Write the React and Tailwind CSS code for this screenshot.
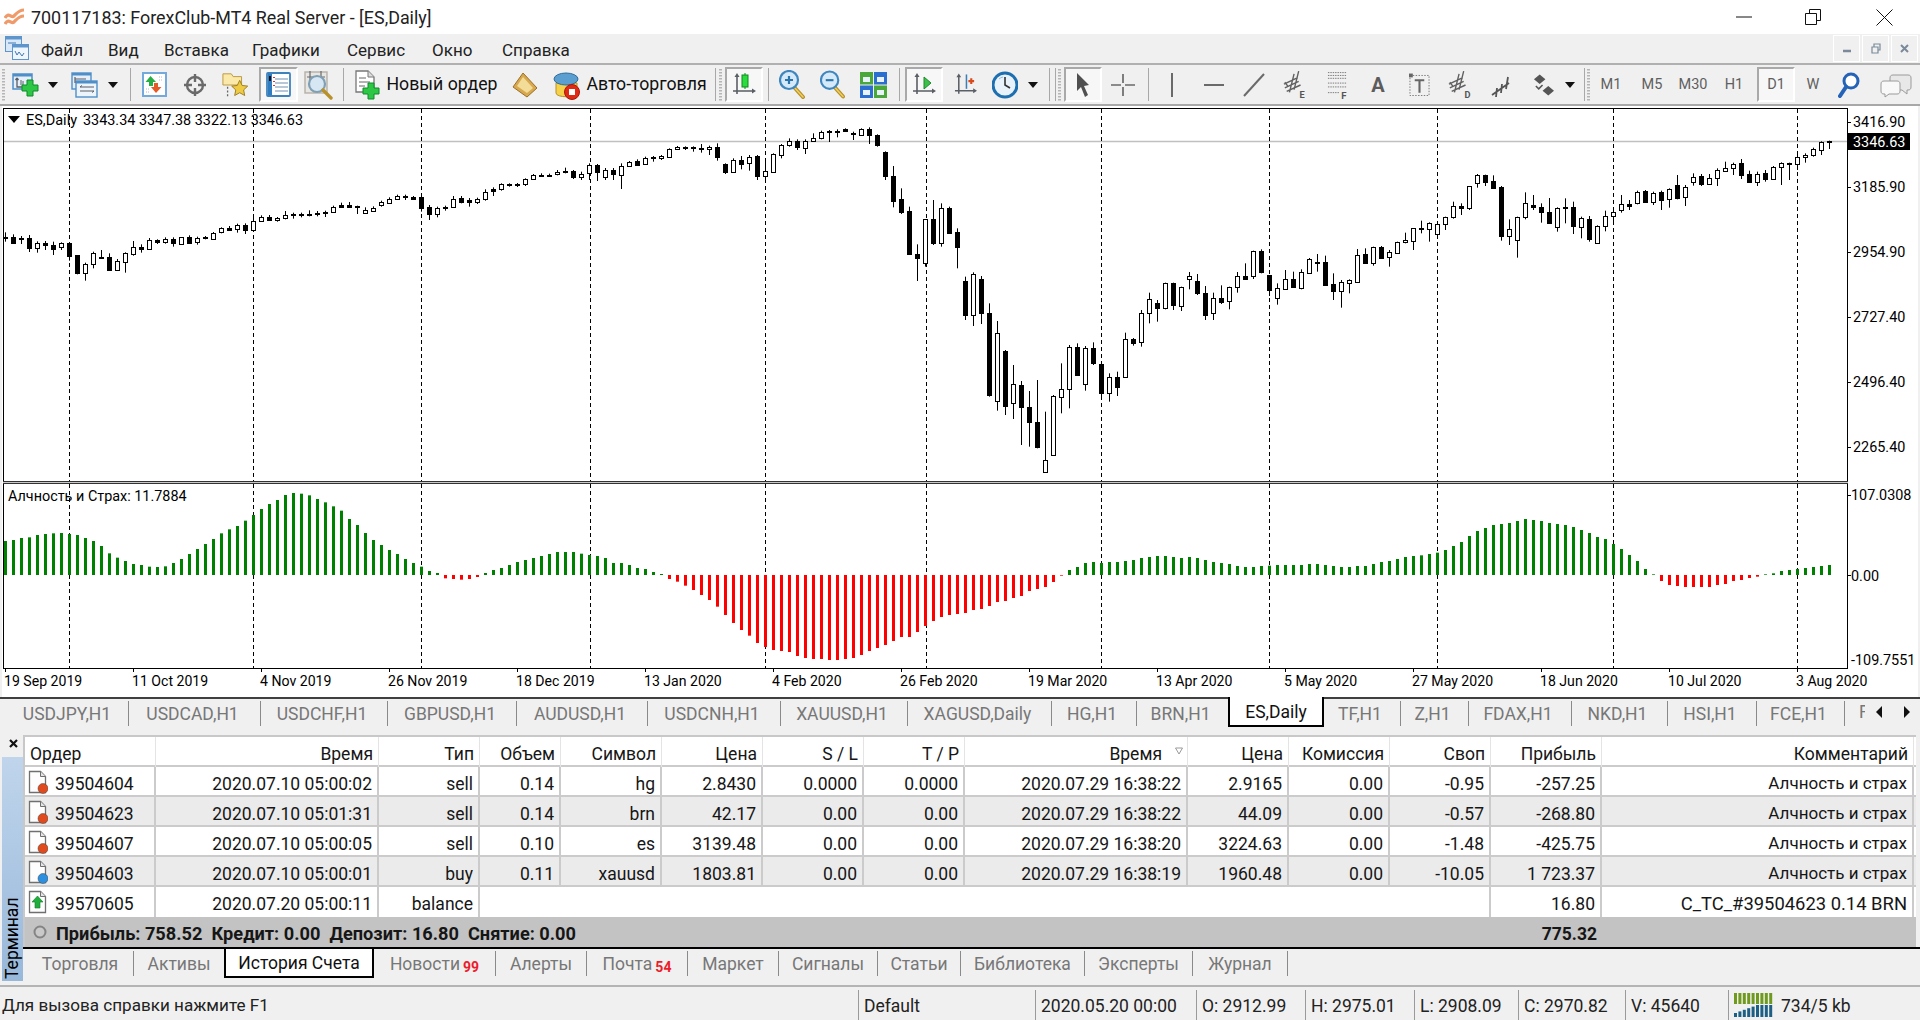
import React from "react";

const C = [
[410,414,397,425,1],[410,428,403,432,1],[414,418,408,432,1],[414,443,405,456,1],[430,443,424,458,0],[430,436,423,450,1],[436,446,425,465,1],[430,440,427,450,0],[430,467,427,482,1],[466,518,465,523,1],[493,518,488,542,0],[460,493,455,505,0],[470,473,450,474,1],[471,510,460,512,1],[484,510,477,513,0],[460,485,457,518,0],[442,461,423,467,0],[441,446,433,458,1],[421,446,414,446,0],[421,425,418,432,1],
[418,425,412,431,0],[418,430,412,440,1],[412,431,411,431,0],[411,428,406,430,1],[413,425,410,434,0],[411,414,408,418,1],[400,416,396,419,0],[385,397,382,400,0],[385,390,378,393,1],[376,386,371,398,0],[375,390,370,402,1],[364,390,350,392,0],[352,362,346,366,0],[351,359,345,361,1],[353,360,351,365,0],[346,353,333,358,0],[341,344,338,356,1],[341,344,338,352,1],[341,345,331,349,1],[338,342,333,349,1],
[335,338,332,351,1],[320,335,317,338,0],[316,320,308,323,1],[315,320,306,323,1],[317,322,317,342,1],[331,338,322,342,0],[325,332,319,335,0],[307,316,302,320,0],[297,308,292,312,0],[287,297,284,298,0],[287,290,284,300,1],[290,296,288,298,1],[292,323,285,335,1],[321,341,315,360,1],[325,341,320,352,0],[320,323,317,332,1],[296,320,288,322,0],[294,306,288,310,1],[300,305,294,320,1],[296,305,293,312,0],
[275,297,268,302,0],[268,274,262,288,1],[253,268,250,272,0],[253,256,250,260,1],[253,256,249,261,1],[238,253,235,258,0],[226,238,222,240,0],[224,227,220,229,1],[224,227,221,230,1],[215,223,210,226,0],[214,216,203,220,1],[213,230,210,237,1],[223,230,215,240,0],[196,218,190,240,0],[196,217,192,243,1],[211,232,204,240,0],[211,222,204,240,1],[199,224,190,267,0],[186,197,183,200,0],[184,194,178,198,1],
[173,193,170,195,0],[172,175,168,185,1],[169,175,165,180,0],[148,170,145,172,0],[140,148,138,150,0],[142,145,139,150,1],[142,145,139,155,1],[144,148,132,158,1],[142,148,137,165,0],[141,171,130,182,1],[192,216,190,222,1],[179,215,175,217,0],[179,191,168,208,1],[170,188,165,212,0],[168,228,165,240,1],[212,229,185,240,0],[163,215,160,218,0],[134,166,132,175,0],[124,134,115,140,0],[124,141,118,150,1],
[122,145,118,162,0],[115,122,100,124,0],[95,115,92,118,0],[93,96,90,126,1],[94,96,88,112,1],[87,92,85,94,1],[99,102,95,120,1],[88,104,85,105,0],[87,106,82,132,1],[106,135,103,140,1],[156,228,154,240,1],[228,302,198,322,1],[298,337,265,342,1],[334,462,320,465,1],[462,473,433,543,1],[358,488,358,500,0],[358,428,300,435,1],[325,428,310,440,0],[323,398,320,402,1],[397,440,385,505,1],
[544,644,530,660,1],[523,644,517,678,0],[538,638,528,672,1],[640,885,610,890,1],[700,902,663,932,0],[753,917,750,945,1],[853,910,795,957,0],[856,920,843,1035,1],[922,965,873,1040,1],[966,1040,840,1045,1],[1081,1117,935,1118,0],[888,1065,885,1068,0],[868,890,790,940,0],[742,868,735,925,0],[742,824,730,826,1],[744,851,738,872,0],[744,790,727,795,1],[793,878,793,900,1],[830,878,820,905,0],[830,860,815,888,1],
[718,830,698,832,0],[718,728,714,737,1],[640,725,630,740,0],[598,640,578,670,0],[609,623,600,665,1],[550,623,548,628,0],[550,614,548,630,1],[561,617,560,633,0],[529,536,516,568,0],[544,578,522,585,1],[580,644,558,660,1],[595,640,578,660,0],[595,605,556,612,1],[562,604,560,628,0],[529,560,516,578,0],[529,536,490,540,1],[454,527,452,537,0],[453,517,448,520,1],[526,571,526,588,1],[565,595,550,614,0],
[538,566,510,568,0],[537,560,515,562,1],[517,563,508,568,0],[478,518,474,522,0],[487,489,462,515,1],[487,555,467,558,1],[552,572,520,600,1],[546,572,540,623,0],[541,548,538,580,0],[466,545,447,546,0],[463,488,445,490,1],[442,490,440,497,0],[442,473,438,476,1],[455,472,450,500,0],[427,458,425,460,0],[421,427,398,430,0],[385,422,384,450,0],[385,388,362,400,1],[370,388,367,425,0],[373,403,368,412,0],
[352,373,350,390,0],[319,352,305,356,0],[319,323,310,345,1],[259,323,258,330,0],[226,250,222,263,0],[226,245,224,258,1],[244,263,226,266,1],[261,407,258,422,1],[388,407,358,435,0],[352,421,350,473,0],[310,352,277,358,0],[316,320,285,330,1],[322,336,310,368,1],[336,369,294,372,1],[325,380,322,395,0],[322,323,295,370,1],[322,377,305,402,1],[354,380,350,415,0],[358,416,348,425,1],[379,428,376,431,0],
[347,379,332,394,0],[335,347,328,375,0],[313,331,285,338,0],[313,319,300,330,1],[275,310,272,313,0],[274,305,270,307,1],[278,305,275,315,0],[277,300,272,330,1],[268,298,265,323,0],[256,293,225,298,1],[262,292,255,318,0],[232,245,220,257,0],[229,251,222,258,1],[235,251,222,255,0],[211,235,205,258,0],[205,212,185,216,0],[192,205,188,225,0],[190,224,177,237,1],[222,245,212,246,1],[222,245,215,258,0],
[218,238,210,245,1],[202,238,198,240,0],[190,202,187,255,0],[190,191,188,240,1],[172,191,165,210,0],[164,172,160,188,0],[147,164,143,170,0],[127,149,124,165,0],[124,127,122,147,1],
];

const IND = [183,180,174,172,165,162,160,159,162,165,174,183,198,220,233,243,252,255,260,261,259,249,237,222,207,192,177,160,148,138,122,105,87,72,60,45,39,41,46,57,67,79,92,117,135,159,180,195,210,222,237,249,260,273,279,295,297,299,297,291,279,270,264,255,246,240,234,228,222,216,216,216,221,225,228,234,249,249,255,264,267,276,282,297,305,317,330,345,360,380,405,429,450,467,489,501,510,513,516,528,534,537,537,540,540,537,534,525,513,504,495,483,471,471,456,438,423,411,405,402,
399,390,387,378,366,363,354,348,333,327,321,306,287,270,261,249,246,249,246,246,243,240,234,231,228,228,231,234,231,234,240,246,249,252,258,261,261,258,257,255,255,255,255,252,252,255,258,261,261,258,258,252,246,243,237,231,228,226,222,218,210,198,186,168,153,144,135,132,129,123,117,120,123,129,132,135,141,150,159,171,177,192,207,225,243,267,283,303,315,318,321,321,321,321,315,312,303,300,294,290,283,280,273,270,267,264,261,258,255];

const VLINES = [69,253.5,421,590,765.5,926,1101.5,1269,1437.5,1613.5,1797.5];
const XAT = (i) => 5.5 + 8 * i;
const snap = (v) => Math.round(v) + 0.5;

const PRICES = [["3416.90",122],["3185.90",187],["2954.90",252],["2727.40",317],["2496.40",382],["2265.40",447]];
const DATES = ["19 Sep 2019","11 Oct 2019","4 Nov 2019","26 Nov 2019","18 Dec 2019","13 Jan 2020","4 Feb 2020","26 Feb 2020","19 Mar 2020","13 Apr 2020","5 May 2020","27 May 2020","18 Jun 2020","10 Jul 2020","3 Aug 2020"];

function MainPane() {
  return (
    <svg width="1916" height="375" viewBox="2 106 1916 375" className="block shrink-0">
      <rect x="2" y="106" width="1916" height="375" fill="#fff" />
      <line x1="3" y1="108.5" x2="1847" y2="108.5" stroke="#000" />
      <line x1="3.5" y1="108" x2="3.5" y2="481" stroke="#000" />
      <line x1="1847.5" y1="108" x2="1847.5" y2="481" stroke="#000" />
      <line x1="4" y1="141.5" x2="1847" y2="141.5" stroke="#c0c0c0" strokeWidth="1.5" />
      {VLINES.map((x) => (
        <line key={x} x1={Math.floor(x) + 0.5} y1="109" x2={Math.floor(x) + 0.5} y2="481" stroke="#000" strokeDasharray="4 3" />
      ))}
      {C.map(([t, b, h, l, k], i) => {
        const x = XAT(i);
        const yt = snap(100 + t / 3), yb = snap(100 + b / 3);
        return (
          <g key={i}>
            <line x1={x} x2={x} y1={100 + h / 3} y2={100 + l / 3} stroke="#000" />
            <rect x={x - 2} y={yt} width="4" height={Math.max(yb - yt, 1)} fill={k ? "#000" : "#fff"} stroke="#000" />
          </g>
        );
      })}
      <path d="M8 116h12l-6 7z" fill="#000" />
      <text x="26" y="125" fontSize="14.5" fill="#000">ES,Daily</text>
      <text x="83" y="125" fontSize="14.4" fill="#000">3343.34 3347.38 3322.13 3346.63</text>
      {PRICES.map(([p, y]) => (
        <g key={p}>
          <line x1="1848" x2="1851" y1={y + 0.5} y2={y + 0.5} stroke="#000" />
          <text x="1853" y={y + 5} fontSize="14.4" fill="#000">{p}</text>
        </g>
      ))}
      <rect x="1848" y="133" width="62" height="17" fill="#000" />
      <text x="1853" y="147" fontSize="14.4" fill="#fff">3346.63</text>
    </svg>
  );
}

function IndicatorPane() {
  return (
    <svg width="1916" height="188" viewBox="2 481 1916 188" className="block shrink-0">
      <rect x="2" y="481" width="1916" height="188" fill="#fff" />
      <rect x="3" y="481" width="1845" height="3" fill="#c8c8c8" />
      <line x1="3" x2="1848" y1="481.5" y2="481.5" stroke="#333" />
      <line x1="3" x2="1848" y1="483.5" y2="483.5" stroke="#333" />
      <line x1="3.5" y1="484" x2="3.5" y2="668" stroke="#000" />
      <line x1="1847.5" y1="484" x2="1847.5" y2="668" stroke="#000" />
      <line x1="3" x2="1848" y1="668.5" y2="668.5" stroke="#000" />
      {VLINES.map((x) => (
        <line key={x} x1={Math.floor(x) + 0.5} y1="484" x2={Math.floor(x) + 0.5} y2="668" stroke="#000" strokeDasharray="4 3" />
      ))}
      {IND.map((v, i) => {
        const x = XAT(i) - 1.5;
        const tip = 480 + v / 3;
        const zero = 575;
        return v <= 285 ? (
          <rect key={i} x={x} y={tip} width="3" height={zero - tip} fill="#008000" />
        ) : (
          <rect key={i} x={x} y={zero} width="3" height={tip - zero} fill="#ff0000" />
        );
      })}
      <text x="8" y="501" fontSize="14.4" fill="#000">Алчность и Страх: 11.7884</text>
      <line x1="1848" x2="1851" y1="495.5" y2="495.5" stroke="#000" />
      <text x="1851" y="500" fontSize="14.4" fill="#000">107.0308</text>
      <line x1="1848" x2="1851" y1="575.5" y2="575.5" stroke="#000" />
      <text x="1851" y="581" fontSize="14.4" fill="#000">0.00</text>
      <text x="1851" y="665" fontSize="14.4" fill="#000">-109.7551</text>
    </svg>
  );
}

function TimeAxis() {
  return (
    <svg width="1916" height="28" viewBox="2 669 1916 28" className="block shrink-0">
      <rect x="2" y="669" width="1916" height="28" fill="#fff" />
      {DATES.map((d, i) => (
        <g key={d}>
          <line x1={5.5 + 128 * i} x2={5.5 + 128 * i} y1="669" y2="672" stroke="#000" />
          <text x={4 + 128 * i} y="686" fontSize="14.1" fill="#000">{d}</text>
        </g>
      ))}
    </svg>
  );
}

/* ---------- toolbar glyphs ---------- */
const Ic = ({ w = 27, h = 27, children }) => (
  <svg width={w} height={h} viewBox={`0 0 ${w} ${h}`}>{children}</svg>
);
const Axes = ({ s = "#5a5f66" }) => (
  <g stroke={s} strokeWidth="1.6" fill={s}>
    <path d="M5 3v19M1 19h21" fill="none" />
    <path d="M5 1l2.5 4h-5zM24 19l-4-2.5v5z" stroke="none" />
  </g>
);
const Plus = ({ x = 0, y = 0 }) => (
  <path transform={`translate(${x} ${y})`} d="M5 0h6v5h5v6h-5v5H5v-5H0V5h5z" fill="#2dc745" stroke="#0f8a2a" />
);
const Window = ({ x, y, w, h, f = "#e6eff9" }) => (
  <g>
    <rect x={x} y={y} width={w} height={h} fill={f} stroke="#4f8fc9" strokeWidth="1.4" />
    <rect x={x} y={y} width={w} height="2.5" fill="#4f8fc9" />
  </g>
);
const Magnifier = ({ sign }) => (
  <Ic w={26} h={29}>
    <path d="M15 17l9 10" stroke="#b8912a" strokeWidth="4" strokeLinecap="round" />
    <path d="M15 17l9 10" stroke="#f0d060" strokeWidth="1.5" strokeLinecap="round" />
    <circle cx="10" cy="10" r="9" fill="#d5e9f8" stroke="#3f86bf" strokeWidth="2.2" />
    {sign === "+" && <path d="M6 10h8M10 6v8" stroke="#2b75ad" strokeWidth="2.2" />}
    {sign === "-" && <path d="M6 10h8" stroke="#2b75ad" strokeWidth="2.2" />}
  </Ic>
);
const Grip = () => (
  <svg width="3" height="32" viewBox="0 0 3 32">
    {Array.from({ length: 11 }).map((_, i) => (
      <rect key={i} x="0" y={i * 3} width="3" height="1.5" fill="#b5b5b5" />
    ))}
  </svg>
);
const Arrow = () => <svg width="10" height="6" viewBox="0 0 10 6"><path d="M0 0h10L5 6z" fill="#111" /></svg>;
const Sep = ({ c }) => <div className={`h-[33px] w-px shrink-0 bg-[#a8a8a8] ${c}`} />;
const Cell = ({ c, children }) => <div className={`flex h-[35px] shrink-0 items-center justify-center ${c}`}>{children}</div>;
const Pressed = ({ c, children }) => (
  <div className={`flex h-[35px] shrink-0 items-center justify-center border-2 border-t-[#a9a9a9] border-l-[#a9a9a9] border-r-white border-b-white bg-[#f7f7f7] ${c}`}>{children}</div>
);
const Hatch = () => (
  <g stroke="#606060" strokeWidth="1.5" fill="none">
    <path d="M1 15l15-7M2 19l15-7M4 23l15-7M7 24l5-20M12 21l5-20M2 13l3 4" />
  </g>
);

function Toolbar() {
  return (
    <div className="flex h-[41px] items-center border-b-2 border-[#a8a8a8] bg-[#f0f0f0]">
      <Cell c="ml-[2px] w-[3px]"><Grip /></Cell>
      <Cell c="ml-[7px] w-[27px]"><Ic w={27} h={24}><rect x="1" y="1" width="19" height="15" fill="#e6eff9" stroke="#4f8fc9" strokeWidth="1.5" /><rect x="1" y="1" width="19" height="2.5" fill="#4f8fc9" /><path d="M5 5v9h8M5 5l-1.5 2M5 5l1.5 2" stroke="#5a5f66" strokeWidth="1.3" fill="none" /><path d="M9 7v5M11 8v4" stroke="#5a5f66" /><Plus x={10} y={7} /></Ic></Cell>
      <Cell c="ml-[9px] w-[10px]"><Arrow /></Cell>
      <Cell c="ml-[13px] w-[27px]"><Ic w={27} h={26}><Window x={1} y={1} w={19} h={16} /><Window x={5} y={9} w={21} h={16} f="#eef4fb" /><path d="M4 5v6M4 7h11" stroke="#5a5f66" strokeWidth="1.2" fill="none" /><path d="M9 15h14M9 19h14M9 15l2-1.5M23 19l-2 1.5" stroke="#5a5f66" fill="none" /></Ic></Cell>
      <Cell c="ml-[10px] w-[10px]"><Arrow /></Cell>
      <Sep c="ml-[12px]" />
      <Cell c="ml-[11px] w-[25px]"><Ic w={25} h={25}><rect x="1" y="1" width="23" height="23" fill="#fff" stroke="#74aadb" strokeWidth="2" /><path d="M8.5 4l-5 6H7v4h4v-4h3z" fill="#27ae44" /><path d="M14 21l5.5-6H16v-4h-4v4H9z" fill="#e65a28" /><path d="M17 5h4M17 8h4M4 17h3M4 20h3" stroke="#bbb" strokeDasharray="1 1" /></Ic></Cell>
      <Cell c="ml-[17px] w-[22px]"><Ic w={22} h={24}><circle cx="11" cy="12" r="8" fill="none" stroke="#6a6a6a" strokeWidth="2.4" /><path d="M11 1v8M11 15v8M0 12h8M14 12h8" stroke="#6a6a6a" strokeWidth="2.4" /></Ic></Cell>
      <Cell c="ml-[16px] w-[27px]"><Ic w={29} h={28}><path d="M1 2h9l2 3h9v9H1z" fill="#fae9a8" stroke="#b8963c" /><path d="M6 16v10" stroke="#666" strokeDasharray="2 2" strokeWidth="1.4" /><path d="M19 9l2.6 5.5 6 .7-4.4 4.1 1.2 6-5.4-3-5.4 3 1.2-6-4.4-4.1 6-.7z" fill="#efcb45" stroke="#9a7a1c" /></Ic></Cell>
      <Pressed c="ml-[10px] w-[39px]"><Ic w={25} h={25}><rect x="1" y="1" width="23" height="23" rx="1" fill="#fff" stroke="#3d82bd" strokeWidth="1.8" /><rect x="2" y="2" width="4" height="21" fill="#2f7cc0" /><path d="M9 7h13M9 11h13M9 15h13M9 19h13" stroke="#9fb6cb" strokeWidth="1.4" /><path d="M8 5v1M8 9v1M8 13v1" stroke="#e03030" strokeWidth="2" /><rect x="3" y="4" width="2" height="5" fill="#111" /></Ic></Pressed>
      <Cell c="ml-[6px] w-[29px]"><Ic w={29} h={30}><rect x="1" y="2" width="22" height="21" fill="#e8e6e2" stroke="#b5b0a8" strokeWidth="1.4" /><path d="M6 1v10M17 1v10M3 7h18" stroke="#6a6a6a" strokeWidth="1.2" /><circle cx="13" cy="14" r="8" fill="#d6e6f2" stroke="#7f9fb5" strokeWidth="2.2" /><path d="M19 20l8 8" stroke="#b8912a" strokeWidth="3.4" strokeLinecap="round" /></Ic></Cell>
      <Sep c="ml-[10px]" />
      <Cell c="ml-[11px] w-[25px]"><Ic w={25} h={30}><path d="M1 1h12l6 6v15H1z" fill="#fff" stroke="#777" strokeWidth="1.3" /><path d="M13 1v6h6" fill="#ddd" stroke="#777" /><path d="M4 8h7M4 12h11M4 16h6" stroke="#666" /><Plus x={8} y={13} /></Ic></Cell>
      <Cell c="ml-[5px] w-[114px] whitespace-nowrap text-[17.7px]">Новый ордер</Cell>
      <Cell c="ml-[13px] w-[26px]"><Ic w={26} h={26}><path d="M1 15L11 1l14 15-10 9z" fill="#d8a84e" stroke="#9a7028" /><path d="M5 14l6-9 10 11-6 5z" fill="#f2dc98" /></Ic></Cell>
      <Cell c="ml-[15px] w-[27px]"><Ic w={27} h={30}><path d="M3 13h21v10c0 5-21 5-21 0z" fill="#f5d24a" stroke="#b89324" /><ellipse cx="13" cy="9" rx="12" ry="6" fill="#5a9fd0" stroke="#2d6c9c" /><circle cx="19" cy="22" r="7.5" fill="#e02a14" stroke="#a8180a" /><rect x="16" y="19" width="6" height="6" fill="#fff" /></Ic></Cell>
      <Cell c="ml-[6px] w-[121px] whitespace-nowrap text-[17.7px]">Авто-торговля</Cell>
      <Sep c="ml-[8px]" />
      <Cell c="ml-[3px] w-[3px]"><Grip /></Cell>
      <Pressed c="ml-[3px] w-[38px]"><Ic w={24} h={26}><Axes /><path d="M13 1v16" stroke="#0c8a1e" /><rect x="10" y="3" width="6" height="12" fill="#2bdc3f" stroke="#0c8a1e" /></Ic></Pressed>
      <Sep c="ml-[5px]" />
      <Cell c="ml-[10px] w-[26px]"><Magnifier sign="+" /></Cell>
      <Cell c="ml-[15px] w-[25px]"><Magnifier sign="-" /></Cell>
      <Cell c="ml-[15px] w-[27px]"><Ic w={27} h={26}><rect x="0" y="0" width="13" height="12.5" fill="#4aa83a" /><rect x="14" y="0" width="13" height="12.5" fill="#2a6fd0" /><rect x="0" y="13.5" width="13" height="12.5" fill="#2a6fd0" /><rect x="14" y="13.5" width="13" height="12.5" fill="#4aa83a" /><path d="M3 5h7v5H3zM17 5h7v5h-7zM3 18h7v5H3zM17 18h7v5h-7z" fill="#e9f1fa" /></Ic></Cell>
      <Sep c="ml-[12px]" />
      <Pressed c="ml-[5px] w-[38px]"><Ic w={24} h={26}><Axes /><path d="M12 5l7 6-7 6z" fill="#3cbf4a" stroke="#1c8a2a" /></Ic></Pressed>
      <Cell c="ml-[11px] w-[23px]"><Ic w={24} h={26}><Axes /><path d="M13 2v15" stroke="#3a7fb8" strokeWidth="1.6" /><path d="M15 9h6M18 6v6" stroke="#d84a1c" strokeWidth="2.2" /></Ic></Cell>
      <Cell c="ml-[15px] w-[26px]"><Ic w={26} h={30}><circle cx="13" cy="15" r="12" fill="#e7f2fb" stroke="#1d6fb0" strokeWidth="3" /><path d="M13 7v8l5 3" stroke="#333" strokeWidth="1.6" fill="none" /><path d="M7 9a8 8 0 0 1 4-2" stroke="#8fc1e5" fill="none" /></Ic></Cell>
      <Cell c="ml-[10px] w-[10px]"><Arrow /></Cell>
      <Sep c="ml-[11px]" />
      <Sep c="ml-[5px]" />
      <Cell c="ml-[2px] w-[3px]"><Grip /></Cell>
      <Pressed c="ml-[3px] w-[38px]"><Ic w={14} h={24}><path d="M1 0l12 12-5 1 4 9-3 2-4-10-4 4z" fill="#505050" /></Ic></Pressed>
      <Cell c="ml-[9px] w-[24px]"><Ic w={24} h={24}><path d="M12 1v9M12 14v9M0 12h10M14 12h10" stroke="#6a6a6a" strokeWidth="1.7" /></Ic></Cell>
      <Sep c="ml-[13px]" />
      <Cell c="ml-[11px] w-[24px]"><Ic w={4} h={24}><path d="M2 0v24" stroke="#6a6a6a" strokeWidth="2" /></Ic></Cell>
      <Cell c="ml-[18px] w-[23px]"><Ic w={20} h={4}><path d="M0 2h20" stroke="#6a6a6a" strokeWidth="2" /></Ic></Cell>
      <Cell c="ml-[18px] w-[22px]"><Ic w={22} h={24}><path d="M1 23L21 1" stroke="#6a6a6a" strokeWidth="2" /></Ic></Cell>
      <Cell c="ml-[18px] w-[24px]"><Ic w={26} h={32}><Hatch /><text x="18" y="30" fontSize="10" fontWeight="700" fill="#555">E</text></Ic></Cell>
      <Cell c="ml-[20px] w-[21px]"><Ic w={22} h={32}><path d="M1 3h20M1 6h20M1 9h20M1 14h20M1 18h20M1 24h12" stroke="#777" strokeDasharray="1.5 1" /><text x="15" y="31" fontSize="10" fontWeight="700" fill="#555">F</text></Ic></Cell>
      <Cell c="ml-[20px] w-[20px]"><span className="text-[20px] font-bold leading-none text-[#5c5c5c]">A</span></Cell>
      <Cell c="ml-[21px] w-[21px]"><Ic w={22} h={24}><rect x="1" y="2" width="20" height="21" fill="none" stroke="#777" strokeDasharray="1.5 1.5" /><rect x="0" y="0" width="4" height="4" fill="#666" /><path d="M6 7h10M11 7v13" stroke="#666" strokeWidth="2.2" /></Ic></Cell>
      <Cell c="ml-[18px] w-[24px]"><Ic w={26} h={32}><Hatch /><text x="18" y="30" fontSize="10" fontWeight="700" fill="#555">D</text></Ic></Cell>
      <Cell c="ml-[19px] w-[19px]"><Ic w={19} h={26}><path d="M1 23L18 11M5 25l1-9M10 21l1-9M15 17l2-12" stroke="#555" strokeWidth="1.8" fill="none" /></Ic></Cell>
      <Cell c="ml-[23px] w-[21px]"><Ic w={22} h={24}><path d="M7 1l6 5-6 5-6-5zM16 13l6 5-6 5-6-5z" fill="#555" /><path d="M3 13l3 3 4-4" stroke="#555" strokeWidth="1.6" fill="none" /></Ic></Cell>
      <Cell c="ml-[11px] w-[10px]"><Arrow /></Cell>
      <Sep c="ml-[9px]" />
      <Cell c="ml-[2px] w-[3px]"><Grip /></Cell>
      <Cell c="ml-[7px] w-[28px] text-[14.5px] text-[#5f5f5f]">M1</Cell>
      <Cell c="ml-[13px] w-[28px] text-[14.5px] text-[#5f5f5f]">M5</Cell>
      <Cell c="ml-[11px] w-[32px] text-[14.5px] text-[#5f5f5f]">M30</Cell>
      <Cell c="ml-[11px] w-[28px] text-[14.5px] text-[#5f5f5f]">H1</Cell>
      <Pressed c="ml-[9px] w-[38px] text-[14.5px] text-[#5f5f5f]">D1</Pressed>
      <Cell c="ml-[6px] w-[24px] text-[14.5px] text-[#5f5f5f]">W</Cell>
      <Cell c="ml-[13px] w-[22px]"><Ic w={22} h={26}><circle cx="13" cy="9" r="7" fill="#fff" stroke="#2563b8" strokeWidth="3" /><path d="M8 15l-6 9" stroke="#2563b8" strokeWidth="4" strokeLinecap="round" /></Ic></Cell>
      <Cell c="ml-[20px] w-[32px]"><Ic w={32} h={26}><path d="M13 3h15c2 0 3 1 3 3v9c0 2-1 3-3 3h-1v4l-5-4H13c-2 0-3-1-3-3V6c0-2 1-3 3-3z" fill="#e8e8e8" stroke="#9a9a9a" /><path d="M4 9h13c2 0 3 1 3 3v7c0 2-1 3-3 3H9l-4 3v-3H4c-2 0-3-1-3-3v-7c0-2 1-3 3-3z" fill="#f8f8f8" stroke="#9a9a9a" /></Ic></Cell>
    </div>
  );
}

/* ---------- tabs ---------- */
const CHART_TABS = [
  ["USDJPY,H1", "w-[127px] pl-[8px]"], ["USDCAD,H1", "w-[132px]"], ["USDCHF,H1", "w-[127px]"], ["GBPUSD,H1", "w-[129px]"],
  ["AUDUSD,H1", "w-[131px]"], ["USDCNH,H1", "w-[133px]"], ["XAUUSD,H1", "w-[127px]"], ["XAGUSD,Daily", "w-[144px]"],
  ["HG,H1", "w-[85px]"], ["BRN,H1", "w-[91px]", 1], ["ES,Daily", "w-[96px]", 2], ["TF,H1", "w-[77px]"], ["Z,H1", "w-[68px]"],
  ["FDAX,H1", "w-[103px]"], ["NKD,H1", "w-[96px]"], ["HSI,H1", "w-[89px]"], ["FCE,H1", "w-[88px]"],
];

function ChartTabs() {
  return (
    <div className="flex h-[31px] items-start border-t-2 border-[#404040] bg-[#f0f0f0] pl-[2px] text-[17.5px]">
      {CHART_TABS.map(([t, w, k]) =>
        k === 2 ? (
          <div key={t} className={`mt-[-2px] flex h-[30px] shrink-0 items-center justify-center border-x-2 border-b-2 border-black bg-white pt-[2px] text-[#111] ${w}`}>{t}</div>
        ) : (
          <div key={t} className={`flex h-[28px] shrink-0 items-center ${w}`}>
            <span className="flex-1 pr-[4px] pt-[2px] text-center text-[#777]">{t}</span>
            {!k && <span className="h-[25px] w-px bg-[#8a8a8a]" />}
          </div>
        )
      )}
      <div className="flex h-[26px] flex-1 items-center justify-between pl-[14px] pr-[10px] text-[#777]">
        <span className="w-[6px] overflow-hidden">F</span>
        <span className="flex w-[34px] justify-between">
          <svg width="6" height="12" viewBox="0 0 6 12"><path d="M6 0v12L0 6z" fill="#111" /></svg>
          <svg width="6" height="12" viewBox="0 0 6 12"><path d="M0 0v12l6-6z" fill="#111" /></svg>
        </span>
      </div>
    </div>
  );
}

/* ---------- history table ---------- */
const COLS = "grid-cols-[131px_223px_101px_81px_101px_101px_101px_101px_223px_101px_101px_101px_111px_312px]";
const HEAD = ["Ордер", "Время", "Тип", "Объем", "Символ", "Цена", "S / L", "T / P", "Время", "Цена", "Комиссия", "Своп", "Прибыль", "Комментарий"];
const ROWS = [
  ["39504604", "2020.07.10 05:00:02", "sell", "0.14", "hg", "2.8430", "0.0000", "0.0000", "2020.07.29 16:38:22", "2.9165", "0.00", "-0.95", "-257.25", "Алчность и страх"],
  ["39504623", "2020.07.10 05:01:31", "sell", "0.14", "brn", "42.17", "0.00", "0.00", "2020.07.29 16:38:22", "44.09", "0.00", "-0.57", "-268.80", "Алчность и страх"],
  ["39504607", "2020.07.10 05:00:05", "sell", "0.10", "es", "3139.48", "0.00", "0.00", "2020.07.29 16:38:20", "3224.63", "0.00", "-1.48", "-425.75", "Алчность и страх"],
  ["39504603", "2020.07.10 05:00:01", "buy", "0.11", "xauusd", "1803.81", "0.00", "0.00", "2020.07.29 16:38:19", "1960.48", "0.00", "-10.05", "1 723.37", "Алчность и страх"],
];

const DocIcon = ({ ball, up }) => (
  <svg width="20" height="24" viewBox="0 0 20 24" className="shrink-0">
    <path d="M1.5 1.5h11l5 5v16h-16z" fill="#fdfdfd" stroke="#6f6f6f" strokeWidth="1.3" />
    <path d="M12.5 1.5v5h5" fill="#e4e4e4" stroke="#6f6f6f" />
    {ball && <circle cx="15" cy="18.5" r="5" fill={ball} stroke="#444" strokeWidth=".5" />}
    {up && <path d="M9.5 6l5.5 6h-3v6H7v-6H4z" fill="#1fae3c" stroke="#107a26" strokeWidth=".6" />}
  </svg>
);

const Td = ({ children, c = "" }) => (
  <div className={`flex items-center justify-end overflow-hidden whitespace-nowrap border-r-2 border-[#cbcbcb] pr-[5px] pt-[4px] ${c}`}>{children}</div>
);

function HistoryTable() {
  return (
    <div className="flex-1 border-t-2 border-l-2 border-[#c8c8c8] bg-white text-[17.5px] text-[#161616]">
      <div className={`grid h-[30px] ${COLS} border-b-2 border-[#cbcbcb]`}>
        {HEAD.map((h, i) => (
          <div key={i} className={`flex items-center whitespace-nowrap border-r border-[#e4e4e4] pr-[5px] pt-[4px] ${i === 0 ? "justify-start pl-[5px]" : "justify-end"}`}>
            <span className={i === 8 ? "mr-[9px]" : ""}>{h}</span>
            {i === 8 && (
              <svg width="8" height="8" viewBox="0 0 8 8" className="ml-[4px] mr-[-1px] mb-[6px]"><path d="M.5 1h7L4 7z" fill="none" stroke="#999" /></svg>
            )}
          </div>
        ))}
      </div>
      {ROWS.map((r, i) => (
        <div key={r[0]} className={`grid h-[30px] ${COLS} border-b-2 border-[#cbcbcb] ${i % 2 ? "bg-[#ebebeb]" : "bg-white"}`}>
          {r.map((v, j) =>
            j === 0 ? (
              <div key={j} className="flex items-center gap-[7px] border-r-2 border-[#cbcbcb] pl-[3px]">
                <DocIcon ball={i === 3 ? "#2c8fe0" : "#e04a1c"} />
                <span className="pt-[4px]">{v}</span>
              </div>
            ) : j === 13 ? (
              <Td key={j} c="text-[17px]">{v}</Td>
            ) : (
              <Td key={j}>{v}</Td>
            )
          )}
        </div>
      ))}
      <div className={`grid h-[30px] ${COLS}`}>
        <div className="flex items-center gap-[7px] border-r-2 border-[#cbcbcb] pl-[3px]"><DocIcon up /><span className="pt-[4px]">39570605</span></div>
        <Td>2020.07.20 05:00:11</Td>
        <Td>balance</Td>
        <div className="col-span-9 border-r-2 border-[#cbcbcb]" />
        <Td>16.80</Td>
        <Td c="border-r-0 text-[18.4px]">C_TC_#39504623 0.14 BRN</Td>
      </div>
      <div className="flex h-[30px] items-center bg-[#c3c3c3] text-[18.2px] font-bold">
        <svg width="16" height="16" viewBox="0 0 16 16" className="ml-[7px] mr-[8px]"><circle cx="8" cy="8" r="5.5" fill="#c9c9c9" stroke="#848484" strokeWidth="2" /></svg>
        <span className="whitespace-pre pt-[4px]">Прибыль: 758.52  Кредит: 0.00  Депозит: 16.80  Снятие: 0.00</span>
        <span className="ml-auto mr-[319px] pt-[4px] text-[17.5px]">775.32</span>
      </div>
    </div>
  );
}

const TERM_TABS = [
  ["Торговля", "w-[111px] pl-[4px]"], ["Активы", "w-[90px]", 1], ["История Счета", "w-[150px]", 2], ["Новости", "w-[122px]", 0, "99"], ["Алерты", "w-[91px]"],
  ["Почта", "w-[101px]", 0, "54"], ["Маркет", "w-[91px]"], ["Сигналы", "w-[99px]"], ["Статьи", "w-[83px]"], ["Библиотека", "w-[124px]"], ["Эксперты", "w-[108px]"], ["Журнал", "w-[95px]"],
];

function TermTabs() {
  return (
    <div className="flex h-[33px] items-start border-t-2 border-black bg-[#f0f0f0] text-[17.5px]">
      {TERM_TABS.map(([t, w, k, n]) =>
        k === 2 ? (
          <div key={t} className={`mt-[-2px] flex h-[31px] shrink-0 items-center justify-center border-x-2 border-y-2 border-black bg-white pt-[2px] text-[#111] ${w}`}>{t}</div>
        ) : (
          <div key={t} className={`flex h-[28px] shrink-0 items-center ${w}`}>
            <span className="flex flex-1 items-center justify-center pt-[2px] text-[#777]">
              {t}
              {n && <span className="ml-[3px] mt-[5px] text-[14px] font-bold leading-none text-[#ed1c2c]">{n}</span>}
            </span>
            {!k && <span className="h-[25px] w-px bg-[#8a8a8a]" />}
          </div>
        )
      )}
    </div>
  );
}

function Terminal() {
  return (
    <div className="flex h-[257px] shrink-0 bg-[#f0f0f0] pt-[7px]">
      <div className="flex w-[23px] shrink-0 flex-col pl-[2px]">
        <div className="flex h-[15px] items-center justify-center pl-[1px] pt-[2px]">
          <svg width="9" height="9" viewBox="0 0 9 9"><path d="M1 1l7 7M8 1L1 8" stroke="#111" strokeWidth="2.2" /></svg>
        </div>
        <div className="mt-[7px] flex h-[224px] w-[21px] rotate-180 items-start justify-start bg-gradient-to-b from-[#98b8da] to-[#c0d5ec] pt-[2px] [writing-mode:vertical-rl]">
          <span className="text-[17.5px] leading-[21px] text-black">Терминал</span>
        </div>
      </div>
      <div className="flex min-w-0 flex-1 flex-col">
        <div className="flex pr-[4px]"><HistoryTable /></div>
        <TermTabs />
      </div>
    </div>
  );
}

const ST = ["w-[177px]", "w-[161px]", "w-[109px]", "w-[109px]", "w-[104px]", "w-[107px]", "w-[103px]"];
const SV = ["Default", "2020.05.20 00:00", "O: 2912.99", "H: 2975.01", "L: 2908.09", "C: 2970.82", "V: 45640"];

function StatusBar() {
  return (
    <div className="flex h-[35px] shrink-0 items-end border-t-2 border-[#b4b4b4] bg-[#f0f0f0] text-[17.5px] text-[#222]">
      <div className="flex h-[30px] w-[858px] shrink-0 items-center pl-[2px] pt-[2px] text-[17.1px]">Для вызова справки нажмите F1</div>
      {SV.map((s, i) => (
        <div key={s} className={`flex h-[30px] shrink-0 items-center whitespace-nowrap border-l border-[#9a9a9a] pl-[5px] pt-[2px] ${ST[i]}`}>{s}</div>
      ))}
      <div className="flex h-[30px] flex-1 items-center border-l border-[#9a9a9a] pl-[5px]">
        <svg width="39" height="24" viewBox="0 0 39 24" className="shrink-0">
          {Array.from({ length: 9 }).map((_, i) => (
            <g key={i}>
              <rect x={i * 4.4} y="0" width="3" height="11" fill="#6f9a1e" />
              <rect x={i * 4.4} y={20 - i * 1.6 > 12 ? 20 - i * 1.6 : 12} width="3" height={24 - (20 - i * 1.6 > 12 ? 20 - i * 1.6 : 12)} fill="#1d5f85" />
            </g>
          ))}
        </svg>
        <span className="ml-[8px] pt-[2px]">734/5 kb</span>
      </div>
    </div>
  );
}

export default function App() {
  const menu = [
    ["Файл", "ml-[11px] w-[67px]"], ["Вид", "w-[56px]"], ["Вставка", "w-[88px]"], ["Графики", "w-[95px]"], ["Сервис", "w-[85px]"], ["Окно", "w-[70px]"], ["Справка", "w-[70px]"],
  ];
  return (
    <div className="flex h-[1020px] w-[1920px] flex-col overflow-hidden bg-[#f0f0f0] font-['Roboto',sans-serif] text-[#111]">
      <div className="flex h-[34px] shrink-0 items-center bg-white pl-[4px]">
        <svg width="21" height="18" viewBox="0 0 21 18" className="shrink-0">
          <path d="M1 10c4-7 6 1 9-2s5-6 10-6M1 16c4-7 6 1 9-2s5-6 10-6" stroke="#f09a6a" strokeWidth="3.2" fill="none" />
        </svg>
        <span className="ml-[6px] pt-[2px] text-[17.9px] text-[#222]">700117183: ForexClub-MT4 Real Server - [ES,Daily]</span>
        <div className="ml-auto flex items-center">
          <svg width="16" height="16" viewBox="0 0 16 16"><path d="M0 8h16" stroke="#111" /></svg>
          <svg width="16" height="16" viewBox="0 0 16 16" className="ml-[53px]"><path d="M.5 4.5h11v11H.5zM4.5 4V.5h11v11H12" fill="none" stroke="#111" /></svg>
          <svg width="17" height="17" viewBox="0 0 17 17" className="ml-[55px] mr-[27px]"><path d="M.5.5l16 16M16.5.5l-16 16" stroke="#111" /></svg>
        </div>
      </div>
      <div className="flex h-[31px] shrink-0 items-center border-b-2 border-[#b0b0b0] bg-[#f0f0f0] pl-[5px] text-[17px] text-[#222]">
        <svg width="25" height="25" viewBox="0 0 25 25" className="shrink-0">
          <rect x=".5" y=".5" width="16" height="15" fill="#d9e8f8" stroke="#5d95cc" />
          <rect x="7.5" y="8.5" width="16" height="15" fill="#f0f6fd" stroke="#5d95cc" />
          <rect x=".5" y=".5" width="16" height="3" fill="#5d95cc" />
          <rect x="7.5" y="8.5" width="16" height="3" fill="#5d95cc" />
          <path d="M3 7h8M10 15l2 4 2-3 3 4 2-3" stroke="#3f78b4" fill="none" />
        </svg>
        {menu.map(([m, c]) => <span key={m} className={`shrink-0 pt-[4px] ${c}`}>{m}</span>)}
        <div className="ml-auto flex h-[27px] gap-[2px] pr-[2px]">
          {[
            <path key="a" d="M1 8h8" stroke="#7a8a9a" strokeWidth="2.5" />,
            <path key="b" d="M1 4h6v6H1zM3 4V1h6v6H7" stroke="#7a8a9a" fill="none" strokeWidth="1.2" />,
            <path key="c" d="M1 2l7 7M8 2L1 9" stroke="#7a8a9a" strokeWidth="2" />,
          ].map((g) => (
            <div key={g.key} className="flex w-[27px] items-center justify-center border border-white">
              <svg width="10" height="11" viewBox="0 0 10 11">{g}</svg>
            </div>
          ))}
        </div>
      </div>
      <Toolbar />
      <div className="flex h-[591px] shrink-0 flex-col px-[2px]">
        <MainPane />
        <IndicatorPane />
        <TimeAxis />
      </div>
      <ChartTabs />
      <Terminal />
      <StatusBar />
    </div>
  );
}
